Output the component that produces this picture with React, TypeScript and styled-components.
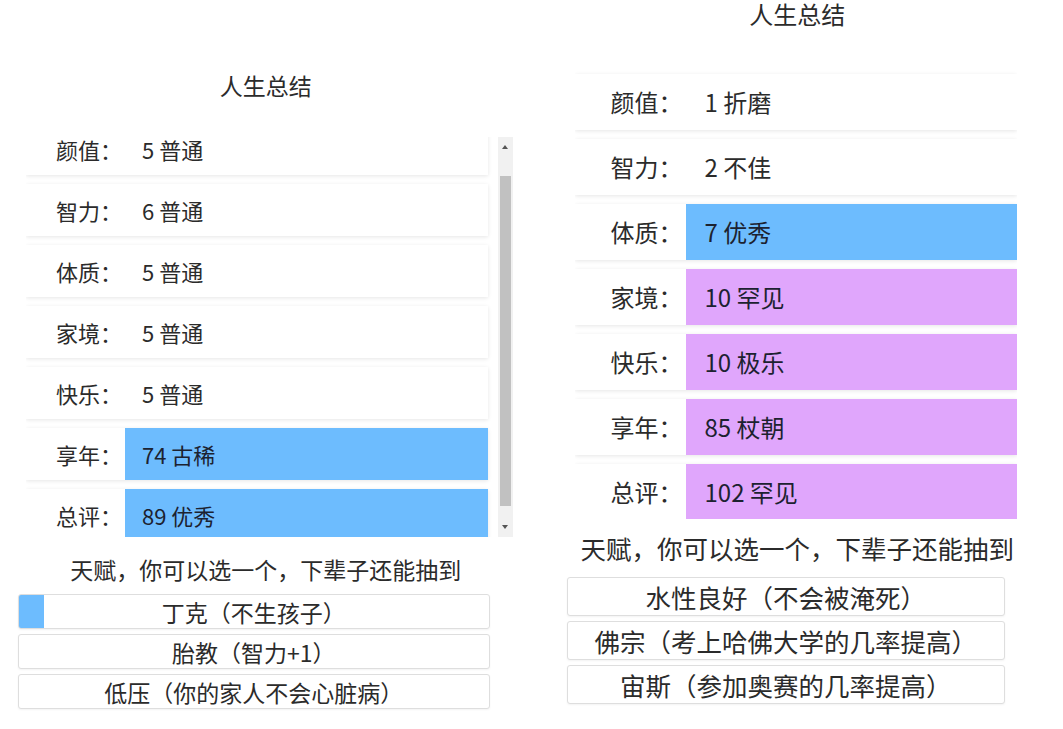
import React, { useLayoutEffect, useRef } from "react";
import styled, { createGlobalStyle } from "styled-components";

const GlobalStyle = createGlobalStyle`
  html, body { margin: 0; padding: 0; background: #ffffff; }
  body {
    font-family: "Noto Sans CJK SC", "Noto Sans", "Liberation Sans", sans-serif;
    color: #2b2b2b;
  }
  * { box-sizing: border-box; }
`;

type Tone = "plain" | "blue" | "purple";

type Cfg = {
  padTop: number;
  titleSize: number;
  titleLine: number;
  titleGap: number;
  listMargin: string;
  listHeight: number;
  listPadY: number;
  listPadRight: number;
  scroll: boolean;
  scrollTop: number;
  rowHeight: number;
  rowGap: number;
  rowFont: number;
  labelWidth: number;
  valuePad: number;
  promptGap: number;
  promptSize: number;
  promptLine: number;
  buttonsGap: number;
  buttonsMargin: string;
  btnHeight: number;
  btnGap: number;
  btnFont: number;
};

const ARROW_H = 17;

const Page = styled.div`
  display: flex;
  flex-direction: row;
  width: 1063px;
  height: 729px;
  overflow: hidden;
`;

const Panel = styled.section<{ $c: Cfg }>`
  flex: 1 1 0;
  display: flex;
  flex-direction: column;
  padding-top: ${(p) => p.$c.padTop}px;
`;

const Title = styled.h2<{ $c: Cfg }>`
  margin: 0 0 ${(p) => p.$c.titleGap}px;
  text-align: center;
  font-weight: 400;
  font-size: ${(p) => p.$c.titleSize}px;
  line-height: ${(p) => p.$c.titleLine}px;
  color: #2b2b2b;
`;

const ListFrame = styled.div<{ $c: Cfg }>`
  margin: ${(p) => p.$c.listMargin};
  height: ${(p) => p.$c.listHeight}px;
  display: flex;
  flex-direction: row;
`;

const Viewport = styled.div<{ $c: Cfg }>`
  flex: 1 1 auto;
  min-width: 0;
  height: 100%;
  padding: ${(p) => p.$c.listPadY}px ${(p) => p.$c.listPadRight}px
    ${(p) => p.$c.listPadY}px 0;
  overflow: hidden;
  display: flex;
  flex-direction: column;
  gap: ${(p) => p.$c.rowGap}px;
`;

const ScrollBar = styled.div`
  flex: 0 0 15px;
  height: 100%;
  background: #f1f1f1;
  display: flex;
  flex-direction: column;
`;

const ScrollArrow = styled.div<{ $dir: "up" | "down" }>`
  flex: 0 0 ${ARROW_H}px;
  display: flex;
  align-items: center;
  justify-content: center;
  &::before {
    content: "";
    width: 0;
    height: 0;
    border-left: 3.5px solid transparent;
    border-right: 3.5px solid transparent;
    ${(p) =>
      p.$dir === "up"
        ? "border-bottom: 4px solid #555; margin-top: 3px;"
        : "border-top: 4px solid #555; margin-bottom: 3px;"}
  }
`;

const ScrollTrack = styled.div`
  flex: 1 1 auto;
  display: flex;
  flex-direction: column;
  padding: 0 2px;
`;

const ScrollThumb = styled.div`
  background: #c1c1c1;
  flex: 0 0 auto;
`;

const Row = styled.div<{ $c: Cfg }>`
  flex: 0 0 auto;
  display: grid;
  grid-template-columns: ${(p) => p.$c.labelWidth}px 1fr;
  height: ${(p) => p.$c.rowHeight}px;
  background: #ffffff;
  box-shadow: 0 1px 4px rgba(0, 0, 0, 0.1);
  font-size: ${(p) => p.$c.rowFont}px;
  line-height: ${(p) => p.$c.rowHeight}px;
`;

const Label = styled.span`
  text-align: right;
  padding-right: 3px;
  color: #2b2b2b;
  white-space: nowrap;
`;

const toneColor: Record<Tone, string> = {
  plain: "#ffffff",
  blue: "#6dbcfe",
  purple: "#e0a6fc",
};

const Value = styled.span<{ $tone: Tone; $pad: number }>`
  background: ${(p) => toneColor[p.$tone]};
  padding-left: ${(p) => p.$pad}px;
  color: ${(p) => (p.$tone === "plain" ? "#2b2b2b" : "#1c2230")};
  white-space: nowrap;
`;

const Prompt = styled.p<{ $c: Cfg }>`
  margin: ${(p) => p.$c.promptGap}px 0 ${(p) => p.$c.buttonsGap}px;
  text-align: center;
  font-size: ${(p) => p.$c.promptSize}px;
  line-height: ${(p) => p.$c.promptLine}px;
  color: #2b2b2b;
  white-space: nowrap;
`;

const Buttons = styled.div<{ $c: Cfg }>`
  margin: ${(p) => p.$c.buttonsMargin};
  display: flex;
  flex-direction: column;
  gap: ${(p) => p.$c.btnGap}px;
`;

const TalentButton = styled.button<{ $c: Cfg; $fill: number }>`
  display: flex;
  align-items: center;
  justify-content: center;
  height: ${(p) => p.$c.btnHeight}px;
  padding: 0;
  border: 1px solid #dedede;
  border-radius: 3px;
  background: ${(p) =>
    p.$fill > 0
      ? `linear-gradient(to right, #6dbcfe ${p.$fill}%, #ffffff ${p.$fill}%)`
      : "#ffffff"};
  box-shadow: 0 1px 2px rgba(0, 0, 0, 0.05);
  font-family: inherit;
  font-size: ${(p) => p.$c.btnFont}px;
  color: #2b2b2b;
  white-space: nowrap;
  cursor: pointer;
`;

type Stat = { label: string; value: string; tone: Tone };
type Talent = { text: string; fill: number };

const leftCfg: Cfg = {
  padTop: 69,
  titleSize: 23,
  titleLine: 32,
  titleGap: 36,
  listMargin: "0 19px 0 26px",
  listHeight: 400,
  listPadY: 13,
  listPadRight: 10,
  scroll: true,
  scrollTop: 27,
  rowHeight: 52,
  rowGap: 9,
  rowFont: 22,
  labelWidth: 99,
  valuePad: 17,
  promptGap: 16,
  promptSize: 23,
  promptLine: 32,
  buttonsGap: 9,
  buttonsMargin: "0 42px 0 18px",
  btnHeight: 35,
  btnGap: 5,
  btnFont: 23,
};

const rightCfg: Cfg = {
  padTop: 0,
  titleSize: 24,
  titleLine: 28,
  titleGap: 38,
  listMargin: "0 46px 0 43px",
  listHeight: 453,
  listPadY: 8,
  listPadRight: 0,
  scroll: false,
  scrollTop: 0,
  rowHeight: 56,
  rowGap: 9,
  rowFont: 24,
  labelWidth: 111,
  valuePad: 19,
  promptGap: 12,
  promptSize: 25.5,
  promptLine: 34,
  buttonsGap: 12,
  buttonsMargin: "0 58px 0 35px",
  btnHeight: 39,
  btnGap: 5,
  btnFont: 25.5,
};

const leftStats: Stat[] = [
  { label: "颜值：", value: "5 普通", tone: "plain" },
  { label: "智力：", value: "6 普通", tone: "plain" },
  { label: "体质：", value: "5 普通", tone: "plain" },
  { label: "家境：", value: "5 普通", tone: "plain" },
  { label: "快乐：", value: "5 普通", tone: "plain" },
  { label: "享年：", value: "74 古稀", tone: "blue" },
  { label: "总评：", value: "89 优秀", tone: "blue" },
];

const rightStats: Stat[] = [
  { label: "颜值：", value: "1 折磨", tone: "plain" },
  { label: "智力：", value: "2 不佳", tone: "plain" },
  { label: "体质：", value: "7 优秀", tone: "blue" },
  { label: "家境：", value: "10 罕见", tone: "purple" },
  { label: "快乐：", value: "10 极乐", tone: "purple" },
  { label: "享年：", value: "85 杖朝", tone: "purple" },
  { label: "总评：", value: "102 罕见", tone: "purple" },
];

const leftTalents: Talent[] = [
  { text: "丁克（不生孩子）", fill: 5.3 },
  { text: "胎教（智力+1）", fill: 0 },
  { text: "低压（你的家人不会心脏病）", fill: 0 },
];

const rightTalents: Talent[] = [
  { text: "水性良好（不会被淹死）", fill: 0 },
  { text: "佛宗（考上哈佛大学的几率提高）", fill: 0 },
  { text: "宙斯（参加奥赛的几率提高）", fill: 0 },
];

function Summary({
  cfg,
  stats,
  talents,
}: {
  cfg: Cfg;
  stats: Stat[];
  talents: Talent[];
}) {
  const viewRef = useRef<HTMLDivElement>(null);
  useLayoutEffect(() => {
    if (viewRef.current) viewRef.current.scrollTop = cfg.scrollTop;
  }, [cfg.scrollTop]);

  const contentH =
    stats.length * cfg.rowHeight +
    (stats.length - 1) * cfg.rowGap +
    cfg.listPadY * 2;
  const trackH = cfg.listHeight - ARROW_H * 2;
  const thumbH = (trackH * cfg.listHeight) / contentH;
  const thumbTop = (trackH * cfg.scrollTop) / contentH;

  return (
    <Panel $c={cfg}>
      <Title $c={cfg}>人生总结</Title>
      <ListFrame $c={cfg}>
        <Viewport $c={cfg} ref={viewRef}>
          {stats.map((s) => (
            <Row $c={cfg} key={s.label}>
              <Label>{s.label}</Label>
              <Value $tone={s.tone} $pad={cfg.valuePad}>
                {s.value}
              </Value>
            </Row>
          ))}
        </Viewport>
        {cfg.scroll && (
          <ScrollBar>
            <ScrollArrow $dir="up" />
            <ScrollTrack>
              <ScrollThumb style={{ marginTop: thumbTop, height: thumbH }} />
            </ScrollTrack>
            <ScrollArrow $dir="down" />
          </ScrollBar>
        )}
      </ListFrame>
      <Prompt $c={cfg}>天赋，你可以选一个，下辈子还能抽到</Prompt>
      <Buttons $c={cfg}>
        {talents.map((t) => (
          <TalentButton $c={cfg} $fill={t.fill} key={t.text}>
            {t.text}
          </TalentButton>
        ))}
      </Buttons>
    </Panel>
  );
}

export default function App() {
  return (
    <>
      <GlobalStyle />
      <Page>
        <Summary cfg={leftCfg} stats={leftStats} talents={leftTalents} />
        <Summary cfg={rightCfg} stats={rightStats} talents={rightTalents} />
      </Page>
    </>
  );
}
